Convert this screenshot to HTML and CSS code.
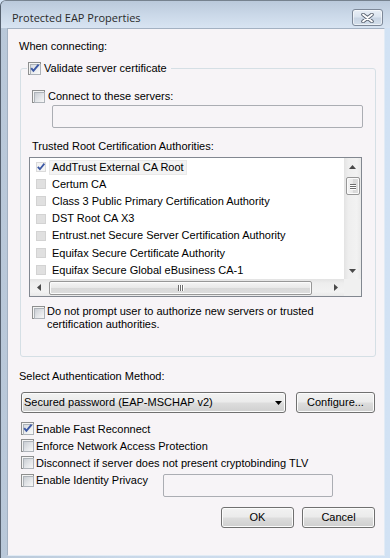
FILE: index.html
```html
<!DOCTYPE html>
<html>
<head>
<meta charset="utf-8">
<title>Protected EAP Properties</title>
<link rel="stylesheet" href="styles.css">
</head>
<body>
<div class="window">
  <div class="titlebar">
    <span class="title">Protected EAP Properties</span>
    <div class="close">
      <svg width="13" height="10" viewBox="0 0 13 10">
        <path d="M2 1.5 L11 8.5 M11 1.5 L2 8.5" stroke="#5b6472" stroke-width="3.6" stroke-linecap="round" fill="none"/>
        <path d="M2 1.5 L11 8.5 M11 1.5 L2 8.5" stroke="#ffffff" stroke-width="1.8" stroke-linecap="round" fill="none"/>
      </svg>
    </div>
  </div>
  <div class="client">
    <div class="label when">When connecting:</div>
    <fieldset class="group">
      <legend class="legend"><span class="lgd"><span class="cb checked"><svg class="tick" width="11" height="11" viewBox="0 0 11 11"><path d="M2.2 5.2 L4.4 7.8 L9.6 1.6" stroke="#3c58a4" stroke-width="2" fill="none"/></svg></span><span>Validate server certificate</span></span></legend>
      <div class="row connect"><span class="cb"></span><span>Connect to these servers:</span></div>
      <div class="textbox servers"></div>
      <div class="label trusted">Trusted Root Certification Authorities:</div>
      <div class="listbox">
        <div class="items">
          <div class="item"><span class="lcb on"><svg width="10" height="10" viewBox="0 0 10 10"><path d="M1.8 4.8 L3.9 7.2 L8.4 1.6" stroke="#3c58a4" stroke-width="1.8" fill="none"/></svg></span><span class="itext sel">AddTrust External CA Root</span></div>
          <div class="item"><span class="lcb"></span><span class="itext">Certum CA</span></div>
          <div class="item"><span class="lcb"></span><span class="itext">Class 3 Public Primary Certification Authority</span></div>
          <div class="item"><span class="lcb"></span><span class="itext">DST Root CA X3</span></div>
          <div class="item"><span class="lcb"></span><span class="itext">Entrust.net Secure Server Certification Authority</span></div>
          <div class="item"><span class="lcb"></span><span class="itext">Equifax Secure Certificate Authority</span></div>
          <div class="item"><span class="lcb"></span><span class="itext">Equifax Secure Global eBusiness CA-1</span></div>
        </div>
        <div class="vscroll">
          <div class="arrow"><svg width="7" height="4" viewBox="0 0 7 4"><path d="M0 4 L3.5 0 L7 4 Z" fill="#4a4a4a"/></svg></div>
          <div class="vthumb"><span class="grip-h"></span><span class="grip-h"></span><span class="grip-h"></span></div>
          <div class="spacer"></div>
          <div class="arrow"><svg width="7" height="4" viewBox="0 0 7 4"><path d="M0 0 L7 0 L3.5 4 Z" fill="#4a4a4a"/></svg></div>
        </div>
        <div class="hscroll">
          <div class="arrow"><svg width="4" height="7" viewBox="0 0 4 7"><path d="M4 0 L4 7 L0 3.5 Z" fill="#4a4a4a"/></svg></div>
          <div class="hthumb"><span class="grip-v"></span><span class="grip-v"></span><span class="grip-v"></span></div>
          <div class="spacer"></div>
          <div class="arrow"><svg width="4" height="7" viewBox="0 0 4 7"><path d="M0 0 L4 3.5 L0 7 Z" fill="#4a4a4a"/></svg></div>
        </div>
        <div class="corner"></div>
      </div>
      <div class="row prompt"><span class="cb"></span><span>Do not prompt user to authorize new servers or trusted<br>certification authorities.</span></div>
    </fieldset>
    <div class="label method">Select Authentication Method:</div>
    <div class="method-row">
      <div class="combo"><span>Secured password (EAP-MSCHAP v2)</span><svg width="7" height="4" viewBox="0 0 7 4"><path d="M0 0 L7 0 L3.5 4 Z" fill="#000"/></svg></div>
      <div class="btn configure">Configure...</div>
    </div>
    <div class="checks">
      <div class="crow"><span class="cb checked"><svg class="tick" width="11" height="11" viewBox="0 0 11 11"><path d="M2.2 5.2 L4.4 7.8 L9.6 1.6" stroke="#3c58a4" stroke-width="2" fill="none"/></svg></span><span>Enable Fast Reconnect</span></div>
      <div class="crow"><span class="cb"></span><span>Enforce Network Access Protection</span></div>
      <div class="crow"><span class="cb"></span><span>Disconnect if server does not present cryptobinding TLV</span></div>
      <div class="crow identity"><span class="cb"></span><span class="idtext">Enable Identity Privacy</span><div class="textbox ident"></div></div>
    </div>
    <div class="buttons">
      <div class="btn">OK</div>
      <div class="btn">Cancel</div>
    </div>
  </div>
</div>
</body>
</html>
```
FILE: styles.css
```css
* { box-sizing: border-box; }
html, body { margin: 0; padding: 0; }
body {
  width: 390px;
  height: 558px;
  overflow: hidden;
  background: #d3e3f5;
  font-family: "Liberation Sans", Arial, sans-serif;
  font-size: 11px;
  color: #000;
}
.window {
  width: 390px;
  height: 558px;
  display: flex;
  flex-direction: column;
  background: linear-gradient(to right, #b9c8d9 0, #c8d7e8 30%, #d2e2f4 100%);
  border-left: 1px solid #55606e;
  border-top: 1px solid #76828f;
  border-top-left-radius: 6px;
  overflow: hidden;
}
.titlebar {
  height: 27px;
  flex: none;
  display: flex;
  align-items: flex-start;
  justify-content: space-between;
  background: linear-gradient(to bottom, #bac9db 0, #cad8e8 50%, #d8e4f2 100%);
}
.title {
  margin: 9px 0 0 11px;
  font-family: "Open Sans", "Liberation Sans", sans-serif;
  font-size: 11px;
  line-height: 15px;
  color: #2a2a2a;
}
.close {
  margin: 8px 7px 0 0;
  width: 31px;
  height: 17px;
  border: 1px solid #7d8898;
  border-radius: 3px;
  background: linear-gradient(to bottom, #e9eff6 0, #dbe4ef 45%, #c8d4e3 55%, #d4dfeb 100%);
  box-shadow: inset 0 0 0 1px rgba(255,255,255,0.55);
  display: flex;
  align-items: center;
  justify-content: center;
}
.client {
  flex: 1;
  margin: 0 5px 2px 6px;
  border: 1px solid #a3b1c2;
  border-right-color: #e2ebf5;
  border-bottom-color: #e2ebf5;
  background: #f7f4f7;
}
.label { line-height: 13px; white-space: nowrap; }
.when { margin: 11px 0 0 11px; }
.group {
  margin: 9px 0 0 12px;
  width: 356px;
  padding: 15px 0 25px 6px;
  border: 1px solid #d5dfe5;
  border-radius: 3px;
  min-width: 0;
}
.legend { padding: 0 4px 0 1px; line-height: 13px; }
.lgd { display: flex; align-items: center; gap: 3px; height: 13px; }
.cb {
  position: relative;
  flex: none;
  display: block;
  width: 13px;
  height: 13px;
  border: 1px solid #8e8f8f;
  background: #f4f4f4;
}
.cb::before {
  content: "";
  position: absolute;
  left: 1px;
  top: 1px;
  width: 9px;
  height: 9px;
  border: 1px solid #aeb3b9;
  background: linear-gradient(135deg, #c9cdd3 0, #e4e6e9 55%, #f7f7f7 100%);
}
.cb.checked::before { background: linear-gradient(135deg, #d7dbe1 0, #eceef0 55%, #fafafa 100%); }
.tick { position: absolute; left: 0; top: 0; }
.row { display: flex; line-height: 13px; white-space: nowrap; }
.connect { margin-left: 5px; height: 13px; align-items: center; gap: 3px; }
.textbox {
  border: 1px solid #abadb3;
  border-radius: 2px;
  background: #f7f4f7;
}
.servers { margin: 2px 0 0 25px; width: 311px; height: 23px; }
.trusted { margin: 12px 0 0 5px; }
.listbox {
  margin: 4px 0 0 2px;
  width: 333px;
  height: 140px;
  border: 1px solid #828790;
  background: #fff;
  display: grid;
  grid-template-columns: 314px 17px;
  grid-template-rows: 121px 17px;
}
.items { padding-top: 0.5px; overflow: hidden; }
.item { height: 17.2px; display: flex; align-items: center; padding-left: 6px; white-space: nowrap; }
.lcb {
  flex: none;
  display: block;
  width: 10px;
  height: 10px;
  border: 1px solid #d3d3d3;
  background: #e0e0e0;
  position: relative;
}
.lcb.on { background: #f4f4f4; border-color: #dadada; }
.lcb svg { position: absolute; left: -1px; top: -1px; }
.itext { margin-left: 3px; padding: 0 3px; line-height: 15px; height: 15px; }
.itext.sel { background: #f3f3f3; box-shadow: inset 0 0 0 1px #e9e9e9; }
.vscroll {
  display: flex;
  flex-direction: column;
  background: linear-gradient(to right, #e3e3e3 0, #eeeeee 25%, #f2f2f2 75%, #e9e9e9 100%);
}
.arrow { flex: none; width: 17px; height: 17px; display: flex; align-items: center; justify-content: center; }
.spacer { flex: 1; }
.vthumb {
  margin: 2px 0 0 2px;
  width: 14px;
  height: 18px;
  border: 1px solid #979797;
  border-radius: 2px;
  background: linear-gradient(to right, #f5f5f5 0, #e8e8e8 50%, #d8d8d8 51%, #dedede 100%);
  box-shadow: inset 0 0 0 1px #fbfbfb;
  display: flex;
  flex-direction: column;
  align-items: center;
  justify-content: center;
  gap: 1px;
}
.grip-h { display: block; width: 6px; height: 1px; background: #6d6d6d; box-shadow: 0 1px 0 #ffffff; }
.hscroll {
  display: flex;
  background: linear-gradient(to bottom, #e3e3e3 0, #eeeeee 25%, #f2f2f2 75%, #e9e9e9 100%);
}
.hthumb {
  margin: 2px 0 0 2px;
  width: 263px;
  height: 14px;
  border: 1px solid #979797;
  border-radius: 2px;
  background: linear-gradient(to bottom, #f5f5f5 0, #e8e8e8 50%, #d8d8d8 51%, #dedede 100%);
  box-shadow: inset 0 0 0 1px #fbfbfb;
  display: flex;
  align-items: center;
  justify-content: center;
  gap: 1px;
}
.grip-v { display: block; width: 1px; height: 6px; background: #6d6d6d; box-shadow: 1px 0 0 #ffffff; }
.corner { background: #f0f0f0; }
.prompt { margin: 8px 0 0 5px; gap: 2px; align-items: flex-start; }
.prompt .cb { margin-top: 1px; }
.method { margin: 13px 0 0 11px; }
.method-row { margin: 9px 0 0 13px; display: flex; gap: 10px; }
.combo, .btn {
  height: 21px;
  border: 1px solid #707070;
  border-radius: 3px;
  background: linear-gradient(to bottom, #f2f2f2 0, #ebebeb 48%, #dddddd 52%, #cfcfcf 100%);
  box-shadow: inset 0 0 0 1px #fbfbfb;
  line-height: 19px;
  white-space: nowrap;
}
.combo {
  width: 265px;
  display: flex;
  align-items: center;
  justify-content: space-between;
  padding: 0 3px 0 2px;
}
.btn { width: 73px; text-align: center; }
.configure { width: 79px; }
.checks { margin: 7px 0 0 13px; }
.crow { height: 17px; display: flex; align-items: center; gap: 2px; white-space: nowrap; }
.crow.identity { margin-top: 1px; height: 25px; align-items: flex-start; }
.crow.identity .cb { margin-top: 2px; }
.crow.identity .idtext { width: 125px; line-height: 17px; }
.ident { margin-top: 2px; width: 170px; height: 23px; }
.buttons { margin-top: 10px; padding-right: 9px; display: flex; justify-content: flex-end; gap: 8px; }
```
